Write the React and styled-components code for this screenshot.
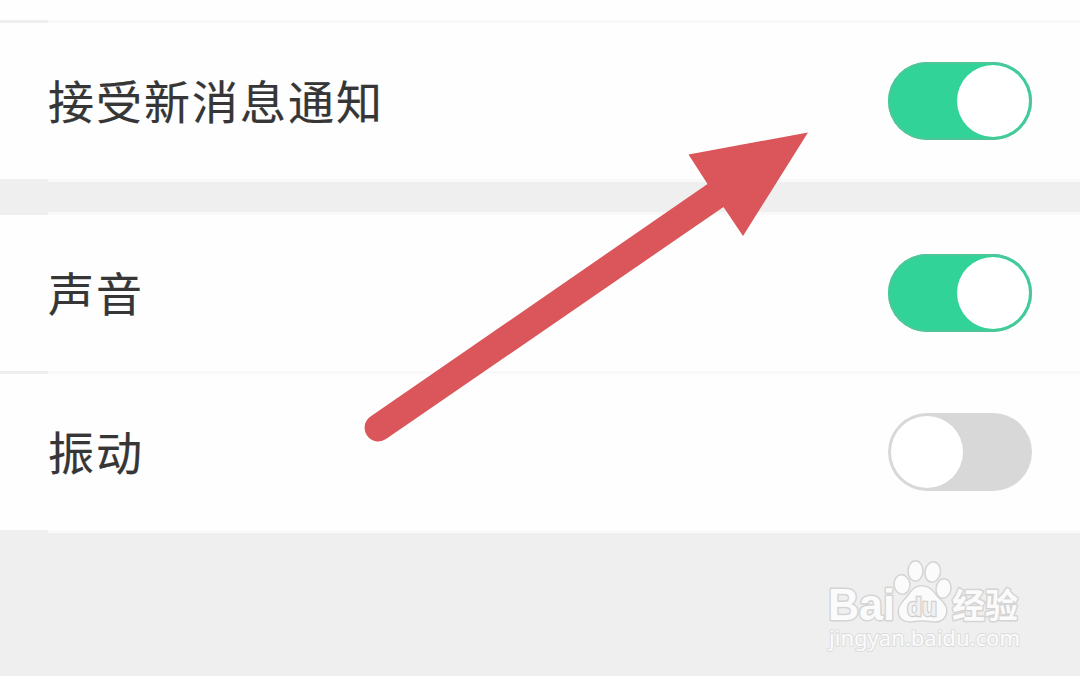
import React from 'react';
import styled, { createGlobalStyle } from 'styled-components';

const GlobalStyle = createGlobalStyle`
    body {
        margin: 0;
        overflow: hidden;
        background-color: #efefef;
    }
`;

const Page = styled.div`
    position: relative;
    height: 676px;
    font-family: "Noto Sans CJK SC", "Noto Sans", sans-serif;
    background-color: #efefef;
`;

const TopSpace = styled.div`
    height: 20px;
    background-color: #fefefe;
`;

const Line = styled.div`
    height: 3px;
    background: linear-gradient(to right, #efefef 48px, #f9f9f9 48px);
`;

const Gap = styled.div`
    height: 30px;
`;

const Row = styled.div`
    display: flex;
    align-items: center;
    justify-content: space-between;
    box-sizing: border-box;
    height: 156px;
    padding: 0 48px;
    background-color: #fefefe;
`;

const Label = styled.span`
    padding-bottom: 4px;
    font-size: 46px;
    line-height: 70px;
    letter-spacing: 2px;
    color: #363636;
    -webkit-text-stroke: 0.2px #363636;
`;

const Switch = styled.div`
    display: flex;
    justify-content: ${props => (props.$on ? 'flex-end' : 'flex-start')};
    box-sizing: border-box;
    width: 144px;
    height: 78px;
    padding: 3px;
    border-radius: 39px;
    background-color: ${props => (props.$on ? '#31d399' : '#d8d8d8')};
    box-shadow: ${props => (props.$on ? 'inset 0 0 0 2px #4fc59a' : 'none')};
`;

const Knob = styled.div`
    width: 72px;
    height: 72px;
    border-radius: 50%;
    background-color: #fff;
`;

const Overlay = styled.svg`
    position: absolute;
    top: 0;
    left: 0;
`;

const Setting = ({ label, on }) => (
    <Row>
        <Label>{label}</Label>
        <Switch $on={on} role="switch" aria-checked={on}>
            <Knob />
        </Switch>
    </Row>
);

const Arrow = () => (
    <Overlay width="1080" height="676" viewBox="0 0 1080 676">
        <path
            d="M370.5 416.5 L707.5 184 L688.5 154.5 L808 132.5 L743 236 L723.5 207 L386 439 A13.5 13.5 0 0 1 370.5 416.5 Z"
            fill="#da565b"
        />
    </Overlay>
);

const Watermark = () => (
    <Overlay width="1080" height="676" viewBox="0 0 1080 676">
        <g fill="#fbfbfb" stroke="#d4d4d4" strokeWidth="3" paintOrder="stroke" strokeLinejoin="round">
            <text x="828" y="620" fontSize="44" fontWeight="700" fontFamily="Liberation Sans" textLength="67" lengthAdjust="spacingAndGlyphs">Bai</text>
            <ellipse cx="902" cy="584.5" rx="7.2" ry="9" transform="rotate(-8 902 584.5)" />
            <ellipse cx="915.5" cy="571" rx="6.7" ry="9.5" />
            <ellipse cx="932.7" cy="572" rx="7" ry="9.5" transform="rotate(10 932.7 572)" />
            <ellipse cx="943.5" cy="588.5" rx="6.7" ry="9" transform="rotate(8 943.5 588.5)" />
            <path d="M922 586.5 C930 586.5 933 592 937 597 C942 602 947 606 946 612 C945 620 938 622 932 621 C925 620 919 620 912 621 C905 622 899 619 899 611 C899 604 905 601 909 595 C913 589 916 586.5 922 586.5 Z" />
            <text x="952" y="618" fontSize="34" fontWeight="700" fontFamily="Noto Sans CJK SC" textLength="66" lengthAdjust="spacingAndGlyphs">经验</text>
            <text x="829" y="646" fontSize="22" fontFamily="Noto Sans" textLength="191" lengthAdjust="spacingAndGlyphs" stroke="#dddddd" strokeWidth="2">jingyan.baidu.com</text>
        </g>
        <text x="907" y="616" fontSize="26" fontWeight="700" fontFamily="Liberation Sans" fill="#f0f0f0" stroke="#cfcfcf" strokeWidth="2.5" paintOrder="stroke" textLength="30" lengthAdjust="spacingAndGlyphs">du</text>
    </Overlay>
);

export default function App() {
    return (
        <Page>
            <GlobalStyle />
            <TopSpace />
            <Line />
            <Setting label="接受新消息通知" on={true} />
            <Line />
            <Gap />
            <Line />
            <Setting label="声音" on={true} />
            <Line />
            <Setting label="振动" on={false} />
            <Line />
            <Watermark />
            <Arrow />
        </Page>
    );
}
